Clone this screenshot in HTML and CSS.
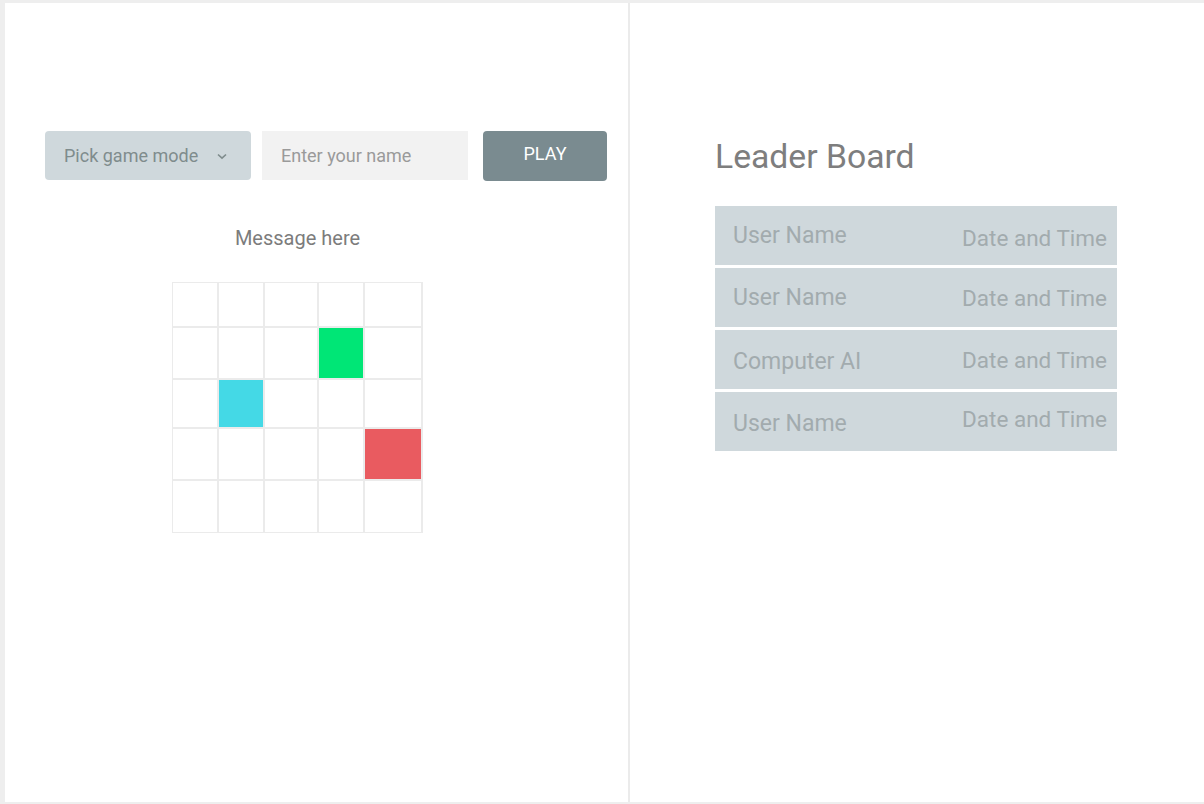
FILE: index.html
```html
<!DOCTYPE html>
<html lang="en">
<head>
<meta charset="utf-8">
<title>Game</title>
<link rel="stylesheet" href="styles.css">
</head>
<body>
<div class="frame">
  <section class="game">
    <div class="controls">
      <div class="select">
        <span>Pick game mode</span>
        <svg class="chev" width="10" height="7" viewBox="0 0 10 7"><path d="M1 1.5 L5 5.2 L9 1.5" fill="none" stroke="#7f8c8d" stroke-width="1.6"/></svg>
      </div>
      <div class="input">Enter your name</div>
      <button class="play">PLAY</button>
    </div>
    <div class="board-wrap">
      <p class="message">Message here</p>
      <div class="grid">
        <div class="cell"></div><div class="cell"></div><div class="cell"></div><div class="cell"></div><div class="cell"></div>
        <div class="cell"></div><div class="cell"></div><div class="cell"></div><div class="cell green"></div><div class="cell"></div>
        <div class="cell"></div><div class="cell cyan"></div><div class="cell"></div><div class="cell"></div><div class="cell"></div>
        <div class="cell"></div><div class="cell"></div><div class="cell"></div><div class="cell"></div><div class="cell red"></div>
        <div class="cell"></div><div class="cell"></div><div class="cell"></div><div class="cell"></div><div class="cell"></div>
      </div>
    </div>
  </section>
  <div class="divider"></div>
  <section class="leaders">
    <h1 class="title">Leader Board</h1>
    <ul class="rows">
      <li class="row"><span class="name">User Name</span><span class="date low">Date and Time</span></li>
      <li class="row"><span class="name">User Name</span><span class="date">Date and Time</span></li>
      <li class="row"><span class="name low">Computer AI</span><span class="date">Date and Time</span></li>
      <li class="row"><span class="name low">User Name</span><span class="date high">Date and Time</span></li>
    </ul>
  </section>
</div>
</body>
</html>
```
FILE: styles.css
```css
* { box-sizing: border-box; }
html, body { margin: 0; padding: 0; }
body {
  font-family: Roboto, "Liberation Sans", sans-serif;
  background: #ffffff;
}
.frame {
  width: 1204px;
  height: 804px;
  border-top: 3px solid #eeeeee;
  border-left: 5px solid #eeeeee;
  border-bottom: 2px solid #eeeeee;
  display: flex;
  background: #fff;
}
.game {
  width: 623px;
  flex: none;
  padding-top: 128px;
}
.divider {
  width: 2px;
  flex: none;
  background: #ebebeb;
}
.leaders {
  flex: 1;
  padding-left: 85px;
  padding-top: 133px;
}
.controls {
  display: flex;
  padding-left: 40px;
  height: 50px;
}
.select {
  width: 206px;
  height: 49px;
  background: #cfd8dc;
  border-radius: 4px;
  display: flex;
  align-items: center;
  padding-left: 19px;
  font-size: 18px;
  color: #7f8c8d;
}
.select .chev { margin-left: 19px; margin-top: 1px; }
.input {
  width: 206px;
  height: 49px;
  margin-left: 11px;
  background: #f2f2f2;
  display: flex;
  align-items: center;
  padding-left: 19px;
  font-size: 18px;
  color: #9a9a9a;
}
.play {
  width: 124px;
  height: 50px;
  margin-left: 15px;
  background: #7a8b90;
  border: none;
  border-radius: 4px;
  color: #ffffff;
  font-family: Roboto, "Liberation Sans", sans-serif;
  font-size: 18px;
  padding: 0 0 5px;
}
.board-wrap {
  width: 251px;
  margin-left: 167px;
  margin-top: 44px;
  text-align: center;
}
.message {
  margin: 0 0 31px;
  font-size: 20px;
  line-height: 26px;
  color: #7c7c7c;
}
.grid {
  display: grid;
  grid-template-columns: 44px 44px 52px 44px 56px;
  grid-template-rows: 43px 50px 47px 50px 51px;
  gap: 2px;
  padding: 1px;
  background: #ebebeb;
  width: 251px;
}
.cell { background: #ffffff; }
.cell.green { background: #00e676; }
.cell.cyan { background: #44d9e6; }
.cell.red { background: #e95b60; }
.title {
  margin: 0 0 28px;
  font-weight: 400;
  font-size: 33.7px;
  line-height: 42px;
  color: #7e7e7e;
}
.rows {
  list-style: none;
  margin: 0;
  padding: 0;
  width: 402px;
}
.row {
  height: 59px;
  margin-bottom: 3px;
  background: #cfd8dc;
  display: flex;
  justify-content: space-between;
  align-items: center;
  padding: 0 10px 0 18px;
  font-size: 23px;
  color: #a2abae;
}
.row .date { font-size: 22.5px; }
.row .low { position: relative; top: 2px; }
.row .high { position: relative; top: -3px; }
```
